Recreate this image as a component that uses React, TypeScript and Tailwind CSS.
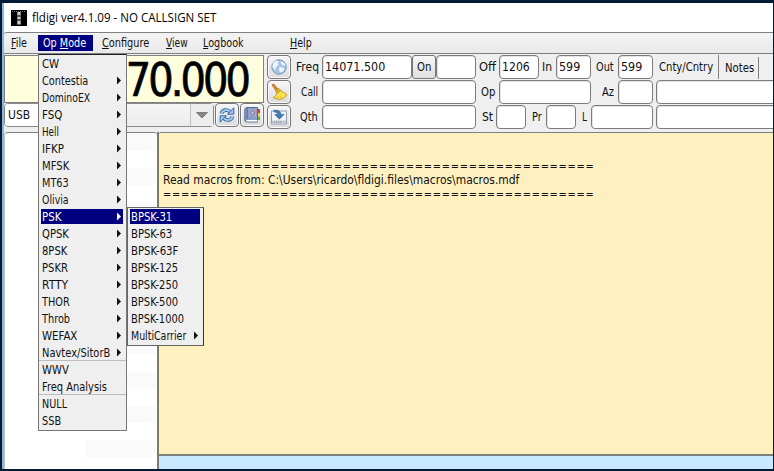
import { useLayoutEffect, useRef, useState } from 'react';
import type { ReactNode } from 'react';

const UI_FONT = "font-['DejaVu_Sans_Condensed','DejaVu_Sans',sans-serif] [font-stretch:condensed]";

// A single line of text squeezed or stretched to an exact width.
function Fit({ w, className = '', children }: { w: number; className?: string; children: ReactNode }) {
  const ref = useRef<HTMLSpanElement>(null);
  const [scale, setScale] = useState(1);
  useLayoutEffect(() => {
    if (ref.current && ref.current.offsetWidth) setScale(w / ref.current.offsetWidth);
  }, [w]);
  return (
    <span className={`block shrink-0 whitespace-pre ${className}`} style={{ width: w }}>
      <span ref={ref} className="inline-block origin-left" style={{ transform: `scaleX(${scale})` }}>
        {children}
      </span>
    </span>
  );
}

function Field({ className, children }: { className: string; children?: ReactNode }) {
  return (
    <div className={`flex h-6 shrink-0 items-center rounded-[4px] border border-[#7c7c7c] bg-white pl-[2px] text-[13px] shadow-[inset_1px_1px_0_#e4e4e4] ${className}`}>
      {children}
    </div>
  );
}

function IconButton({ children }: { children: ReactNode }) {
  return (
    <div className="flex h-6 w-6 shrink-0 items-center justify-center rounded-[4px] border border-[#777] bg-linear-to-b from-[#f6f6f6] to-[#dcdcdc] shadow-[inset_0_0_0_1px_#fafafa]">
      {children}
    </div>
  );
}

const MODES: { name: string; w: number; sub?: boolean; sep?: boolean }[] = [
  { name: 'CW', w: 17 },
  { name: 'Contestia', w: 46, sub: true },
  { name: 'DominoEX', w: 48, sub: true },
  { name: 'FSQ', w: 20, sub: true },
  { name: 'Hell', w: 17, sub: true },
  { name: 'IFKP', w: 22, sub: true },
  { name: 'MFSK', w: 27, sub: true },
  { name: 'MT63', w: 27, sub: true },
  { name: 'Olivia', w: 27, sub: true },
  { name: 'PSK', w: 19, sub: true },
  { name: 'QPSK', w: 27, sub: true },
  { name: '8PSK', w: 25, sub: true },
  { name: 'PSKR', w: 26, sub: true },
  { name: 'RTTY', w: 26, sub: true },
  { name: 'THOR', w: 28, sub: true },
  { name: 'Throb', w: 28, sub: true },
  { name: 'WEFAX', w: 35, sub: true },
  { name: 'Navtex/SitorB', w: 68, sub: true, sep: true },
  { name: 'WWV', w: 27 },
  { name: 'Freq Analysis', w: 65, sep: true },
  { name: 'NULL', w: 25 },
  { name: 'SSB', w: 19 },
];

const PSK_MODES: { name: string; w: number; sub?: boolean }[] = [
  { name: 'BPSK-31', w: 41 },
  { name: 'BPSK-63', w: 41 },
  { name: 'BPSK-63F', w: 47 },
  { name: 'BPSK-125', w: 47 },
  { name: 'BPSK-250', w: 47 },
  { name: 'BPSK-500', w: 47 },
  { name: 'BPSK-1000', w: 53 },
  { name: 'MultiCarrier', w: 55, sub: true },
];

function MenuRow({ name, w, sub, active, sep }: { name: string; w: number; sub?: boolean; active: boolean; sep?: boolean }) {
  return (
    <div className={`h-[17px] shrink-0 pt-px pr-[3px] pl-[2px] ${sep ? 'border-b border-[#bcbcbc]' : ''}`}>
      <div className={`flex h-[15px] items-start justify-between pr-[2px] pl-[1px] leading-[17px] ${active ? 'bg-[#000080] text-white' : 'text-[#111]'}`}>
        <Fit w={w}>{name}</Fit>
        {sub && (
          <svg width="4" height="9" viewBox="0 0 4 9" fill="currentColor" className="mt-[3px]"><path d="M0 0.5L4 4.5L0 8.5Z" /></svg>
        )}
      </div>
    </div>
  );
}

const RULE = '='.repeat(48);

export default function App() {
  return (
    <div className={`relative flex h-[471px] w-[774px] overflow-hidden bg-[#001b36] pt-[3px] pb-[2px] text-[12px] text-[#111] ${UI_FONT}`}>
      <div className="w-[2px] shrink-0" />
      <div className="w-[2px] shrink-0 bg-[#8db6d6]" />
      <div className="flex w-[769px] shrink-0 flex-col overflow-hidden bg-[#efefef]">
        {/* title bar */}
        <div className="flex h-[29px] shrink-0 items-center bg-white pl-[7px]">
          <svg width="16" height="16" viewBox="0 0 16 16" className="mr-[5px]">
            <rect width="16" height="16" fill="#000" />
            <path d="M1 1.5H15" stroke="#777" strokeWidth="1" strokeDasharray="1 1" />
            <path d="M6 2H10V15H6Z" fill="#555" />
            <path d="M6.5 2H9.5V5H6.5ZM6.5 7H9.5V9H6.5ZM6.5 11H9.5V14H6.5Z" fill="#ccc" />
          </svg>
          <Fit w={184} className="font-['Open_Sans','Noto_Sans',sans-serif] text-[12px] leading-[18px] text-black [font-stretch:normal]">fldigi ver4.1.09 - NO CALLSIGN SET</Fit>
        </div>

        {/* menu bar */}
        <div className="flex h-[22px] shrink-0 items-center rounded-tl-[3px] border-y border-[#808080] bg-linear-to-b from-[#f3f3f3] to-[#e9e9e9] pl-[7px]">
          <Fit w={16}><u>F</u>ile</Fit>
          <div className="mr-[9px] ml-[11px] flex h-4 w-[55px] items-center bg-[#000080] pl-[5px] text-white">
            <Fit w={43}>Op <u>M</u>ode</Fit>
          </div>
          <Fit w={47} className="mr-[17px]"><u>C</u>onfigure</Fit>
          <Fit w={22} className="mr-[15px]"><u>V</u>iew</Fit>
          <Fit w={41} className="mr-[46px]"><u>L</u>ogbook</Fit>
          <Fit w={22}><u>H</u>elp</Fit>
        </div>

        {/* rig control and log entry */}
        <div className="flex h-[77px] shrink-0">
          <div className="flex w-[260px] shrink-0 flex-col pt-px">
            <div className="flex h-[48px] items-center justify-end border border-[#808080] bg-[#ffffdd] pt-[2px] pr-[15px]">
              <Fit w={190} className="text-[46.5px] leading-[46px] tracking-[-3px] text-black [-webkit-text-stroke:0.7px_black]">14070.000</Fit>
            </div>
            <div className="flex h-6">
              <div className="flex h-6 w-[210px] items-center justify-between rounded-[4px] border border-[#8a8a8a] bg-linear-to-b from-[#f5f5f5] to-[#ececec]">
                <div className="flex h-[22px] w-[60px] items-center rounded-l-[3px] bg-white pl-[3px]"><Fit w={22}>USB</Fit></div>
                <div className="flex h-[22px] w-[23px] items-center justify-center border-l border-[#c4c4c4] bg-[#ededed]">
                  <svg width="12" height="6" viewBox="0 0 12 6"><path d="M0.5 0.5H11.5L6 6Z" fill="#888" stroke="#666" strokeWidth="0.7" /></svg>
                </div>
              </div>
              <div className="ml-px flex gap-px">
                <IconButton>
                  <svg width="18" height="18" viewBox="0 0 18 18" fill="none" className="shrink-0">
                    <path d="M3.5 7.5C4.2 4 9.5 2.7 12.4 6" stroke="#3469a8" strokeWidth="3.8" />
                    <path d="M3.5 7.5C4.2 4 9.5 2.7 12.4 6" stroke="#a8c7e8" strokeWidth="2" />
                    <path d="M15.8 1.8V8.2H9.6Z" fill="#a8c7e8" stroke="#3469a8" />
                    <path d="M14.5 10.5C13.8 14 8.5 15.3 5.6 12" stroke="#3469a8" strokeWidth="3.8" />
                    <path d="M14.5 10.5C13.8 14 8.5 15.3 5.6 12" stroke="#a8c7e8" strokeWidth="2" />
                    <path d="M2.2 16.2V9.8H8.4Z" fill="#a8c7e8" stroke="#3469a8" />
                  </svg>
                </IconButton>
                <IconButton>
                  <svg width="18" height="18" viewBox="0 0 18 18" className="shrink-0">
                    <path d="M3 1.5H14.5V16H4Q1.8 16 1.8 14V3Z" fill="#8b9ec6" stroke="#566b95" />
                    <path d="M3.5 14H14.5V15.5H3.5Z" fill="#fff" />
                    <path d="M4.2 2V13" stroke="#5a70a0" strokeWidth="1.2" />
                    <rect x="6" y="3.2" width="7" height="7" fill="#a6add0" />
                    <circle cx="9.5" cy="6.7" r="2.3" fill="#c9a9bf" stroke="#777ca9" />
                    <path d="M15 3H17V7H15Z" fill="#d93a2b" /><path d="M15 7H17V10.5H15Z" fill="#eed333" /><path d="M15 10.5H17V14H15Z" fill="#64b23c" />
                  </svg>
                </IconButton>
              </div>
            </div>
          </div>

          <div className="ml-[3px] flex w-6 shrink-0 flex-col gap-px pt-px">
            <IconButton>
              <svg width="18" height="18" viewBox="0 0 18 18" className="shrink-0">
                <circle cx="9" cy="9" r="7.2" fill="#a7c4e5" stroke="#7898bc" />
                <path d="M3 5L6 2.6L9 3.2L7.8 5.3L8.6 7L6.5 8.6L5 12L2.5 9ZM10.5 3L14.3 5L15.4 8L13 7.6L11.4 6ZM9.4 9L12.5 9.3L14.5 11.3L11.5 14.8L9.2 13Z" fill="#eef5fc" />
              </svg>
            </IconButton>
            <IconButton>
              <svg width="18" height="18" viewBox="0 0 18 18" className="shrink-0">
                <path d="M2 1.8L3.8 1L8 6.2L6 7.8Z" fill="#e58c25" stroke="#a85d17" strokeWidth="0.7" />
                <path d="M5.4 8L9 5.4L11.3 8.4L7.6 11.2Z" fill="#efb52a" stroke="#a88017" strokeWidth="0.7" />
                <path d="M10.8 7.6L16.8 11.6Q15 16 9 16.5L3 14.6Q6 13.5 6.9 10.4Z" fill="#ffe04e" stroke="#b18b16" strokeWidth="0.8" />
                <path d="M7 14.8L8.4 13.2M10 15L11 13.4" stroke="#d4a52a" strokeWidth="0.7" />
              </svg>
            </IconButton>
            <IconButton>
              <svg width="18" height="18" viewBox="0 0 18 18" className="shrink-0">
                <path d="M1.5 3H16.5V16H1.5Z" fill="#f3f5f7" stroke="#8fa0b4" />
                <path d="M2 12.5H16V15.5H2Z" fill="#c2c8d0" />
                <path d="M4 14H12" stroke="#79828d" strokeDasharray="1 1" />
                <path d="M4 2.2Q10.6 1.6 11 6.4H14L9.4 11.2L4.8 6.4H7.7Q7.4 4 4 3.8Z" fill="#3f7caf" stroke="#235b8d" strokeWidth="0.6" />
              </svg>
            </IconButton>
          </div>

          <div className="flex w-[362px] shrink-0 flex-col gap-px pt-px">
            <div className="flex h-6 items-center">
              <Fit w={23} className="mr-[3px] ml-[5px]">Freq</Fit>
              <Field className="w-[90px]"><Fit w={60}>14071.500</Fit></Field>
              <div className="flex h-6 w-6 items-center justify-center rounded-[3px] border border-[#777] bg-linear-to-b from-[#f7f7f7] to-[#dfdfdf]"><Fit w={14}>On</Fit></div>
              <Field className="w-[40px]" />
              <Fit w={17} className="mr-[3px] ml-[3px]">Off</Fit>
              <Field className="w-[40px]"><Fit w={28}>1206</Fit></Field>
              <Fit w={10} className="mr-[4px] ml-[3px]">In</Fit>
              <Field className="w-[35px]"><Fit w={21}>599</Fit></Field>
              <Fit w={18} className="mr-[4px] ml-[5px]">Out</Fit>
              <Field className="w-[35px]"><Fit w={21}>599</Fit></Field>
            </div>
            <div className="flex h-6 items-center">
              <Fit w={17} className="mr-[4px] ml-[10px]">Call</Fit>
              <Field className="w-[154px]" />
              <Fit w={14} className="mr-[4px] ml-[5px]">Op</Fit>
              <Field className="w-[92px]" />
              <Fit w={12} className="mr-[4px] ml-[11px]">Az</Fit>
              <Field className="w-[35px]" />
            </div>
            <div className="flex h-6 items-center">
              <Fit w={18} className="mr-[4px] ml-[9px]">Qth</Fit>
              <Field className="w-[154px]" />
              <Fit w={11} className="mr-[3px] ml-[6px]">St</Fit>
              <Field className="w-[30px]" />
              <Fit w={10} className="mr-[4px] ml-[6px]">Pr</Fit>
              <Field className="w-[30px]" />
              <Fit w={5} className="mr-[4px] ml-[6px]">L</Fit>
              <Field className="w-[62px]" />
            </div>
          </div>

          <div className="ml-[3px] flex w-[120px] shrink-0 flex-col gap-px pt-px">
            <div className="flex h-6">
              <div className="flex h-6 w-[63px] items-center border-r border-[#808080] pl-[3px]"><Fit w={54}>Cnty/Cntry</Fit></div>
              <div className="mt-[2px] flex h-[22px] w-[40px] items-center border-r border-[#808080] pl-[6px]"><Fit w={29}>Notes</Fit></div>
            </div>
            <Field className="w-[140px]" />
            <Field className="w-[140px]" />
          </div>
        </div>

        {/* signal browser and receive panel */}
        <div className="mt-px flex min-h-0 flex-1 rounded-tl-[3px] border-l border-[#b9c4cc]">
          <div className="flex w-[152px] shrink-0 flex-col overflow-hidden rounded-t-[3px] border-t border-[#808080] bg-white">
            <div className="mt-px ml-[80px] h-full w-[71px] bg-[repeating-linear-gradient(180deg,#fafafa_0px,#fafafa_17px,#ffffff_17px,#ffffff_34px)]" />
          </div>
          <div className="flex flex-1 flex-col border-l-2 border-[#7d796b]">
            <div className="flex flex-1 flex-col rounded-tl-[2px] border-t border-[#808080] bg-[#fff0c0] pt-[26px] pl-[4px] leading-[14px]">
              <Fit w={432} className="text-[11.5px] tracking-[0.8px]">{RULE}</Fit>
              <Fit w={356}>{'Read macros from: C:\\Users\\ricardo\\fldigi.files\\macros\\macros.mdf'}</Fit>
              <Fit w={432} className="text-[11.5px] tracking-[0.8px]">{RULE}</Fit>
            </div>
            <div className="h-[15px] shrink-0 border-t-2 border-[#7b817c] bg-[#c8e9ff]" />
          </div>
        </div>
      </div>

      {/* open Op Mode menu */}
      <div className="absolute top-[54px] left-[38px] flex h-[377px] w-[89px] flex-col border border-[#777] border-t-[#222] bg-[#efefef]">
        {MODES.map((m) => (
          <MenuRow key={m.name} {...m} active={m.name === 'PSK'} />
        ))}
      </div>
      <div className="absolute top-[207px] left-[127px] flex h-[139px] w-[77px] flex-col border border-[#666] border-r-[#333] bg-[#efefef]">
        {PSK_MODES.map((m) => (
          <MenuRow key={m.name} {...m} active={m.name === 'BPSK-31'} />
        ))}
      </div>
    </div>
  );
}
